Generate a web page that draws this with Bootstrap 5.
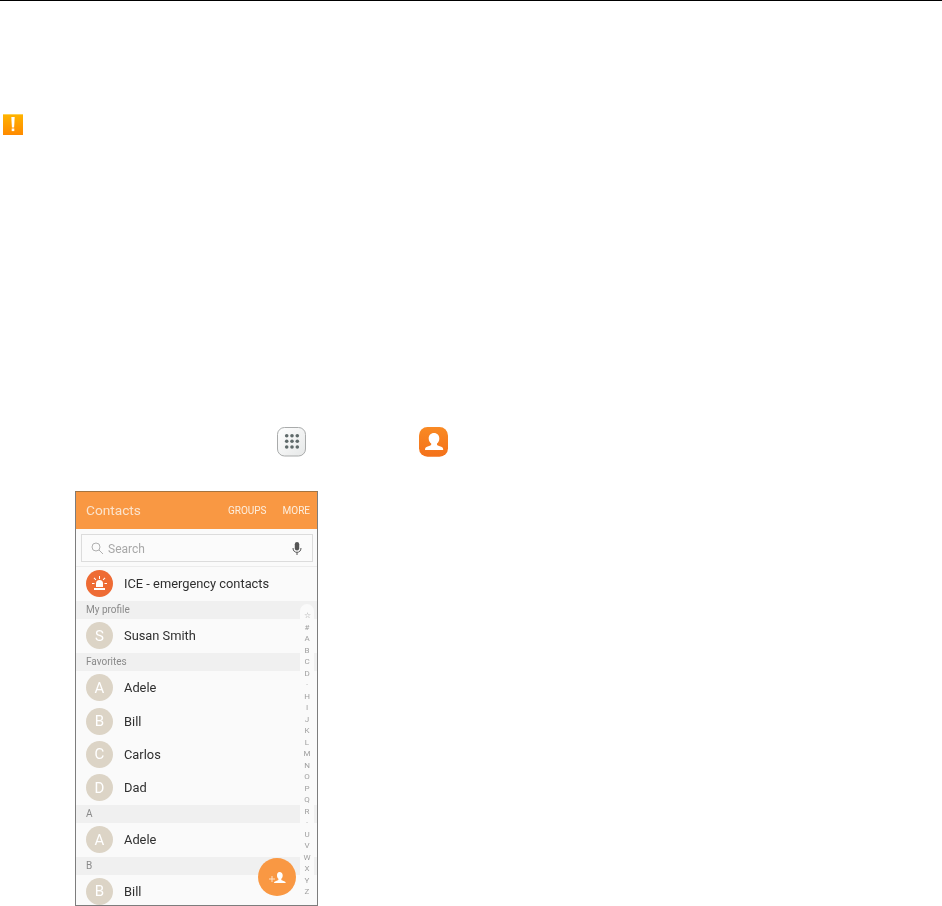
<!DOCTYPE html>
<html lang="en">
<head>
<meta charset="utf-8">
<title>Contacts</title>
<link href="https://cdn.jsdelivr.net/npm/bootstrap@5.3.0/dist/css/bootstrap.min.css" rel="stylesheet">
<style>
html,body{background:#fff;margin:0;height:906px;overflow:hidden}
body{font-family:Roboto,"Liberation Sans",sans-serif}
.rule-top{height:1px;background:#000}
.warn-icon{display:block;margin:113px 0 0 3px;width:20px;height:22px}
.launch-icons{margin:291px 0 0 277px;height:31px;gap:113px}
.launch-icons svg{display:block}
.phone{position:relative;margin:33px 0 0 75px;width:243px;height:415px;border:1px solid #7d7d7d;border-top-color:#a5743f;background:#fafafa;overflow:hidden;filter:blur(.4px)}
.ph-head{height:37px;background:#f99843;color:#fbe3cc;padding:0 7px 0 10px}
.ph-title{font-size:13.7px}
.ph-act{font-size:10px;color:#fdeede;margin-left:16px}
.ph-searchwrap{height:38px;padding:5px 4px 4px 5px;border-bottom:1px solid #ececec}
.ph-search{height:28px;border:1px solid #dcdcdc;background:#fbfbfb;padding:1px 10px 0 9px;color:#a8a8a8;font-size:12px;gap:4px}
.ph-row{height:33.4px;padding-left:10px;font-size:12.85px;color:#2f2f2f;gap:11px}
.ph-ice{height:33.7px}
.ph-sec{height:18.5px;background:#f0f0f0;color:#8a8a8a;font-size:10px;padding-left:10px}
.ph-av{width:27px;height:27px;border-radius:50%;background:#dcd4c6;color:#fff;font-size:15px;flex:none}
.ph-ice-av{background:#ee6b34}
.ph-index{position:absolute;left:224px;top:112px;width:14px;height:298px;background:#fafafa;border-radius:8px;color:#a0a0a0;font-size:8px;padding-top:6px;text-align:center}
.ph-index span{display:block;height:11.5px;line-height:11.5px}
.ph-fab{position:absolute;left:182px;top:366px;width:38px;height:38px;border-radius:50%;background:#f99843}
</style>
</head>
<body>
<div class="rule-top"></div>
<svg class="warn-icon" viewBox="0 0 20 22">
  <defs><linearGradient id="w" x1="0" y1="0" x2="0" y2="1"><stop offset="0" stop-color="#ffb400"/><stop offset="1" stop-color="#ff8a00"/></linearGradient></defs>
  <rect y="0" width="20" height="21" fill="url(#w)"/><rect y="0" width="20" height="1" fill="#ffd050"/>
  <path d="M8.300 3h3.400l-.6 10.500H8.900z" fill="#fff"/><rect x="8.700" y="14.500" width="2.600" height="2.600" fill="#fff"/>
</svg>
<div class="launch-icons d-flex">
  <svg width="29" height="31" viewBox="0 0 29 31">
    <defs><linearGradient id="g" x1="0" y1="0" x2="1" y2="1"><stop offset="0" stop-color="#fff"/><stop offset="1" stop-color="#e6e8e8"/></linearGradient></defs>
    <rect x=".5" y=".5" width="28" height="28.500" rx="7" fill="url(#g)" stroke="#a9abab"/>
    <g fill="#5f6a6a"><circle cx="9.700" cy="8.700" r="1.800"/><circle cx="15" cy="8.700" r="1.800"/><circle cx="20.300" cy="8.700" r="1.800"/><circle cx="9.700" cy="14.300" r="1.800"/><circle cx="15" cy="14.300" r="1.800"/><circle cx="20.300" cy="14.300" r="1.800"/><circle cx="9.700" cy="20" r="1.800"/><circle cx="15" cy="20" r="1.800"/><circle cx="20.300" cy="20" r="1.800"/></g>
  </svg>
  <svg width="29" height="31" viewBox="0 0 29 31">
    <defs><linearGradient id="o" x1="0" y1="0" x2="0" y2="1"><stop offset="0" stop-color="#f98a24"/><stop offset="1" stop-color="#f4711a"/></linearGradient></defs>
    <rect y="0" width="29" height="29.700" rx="8.500" fill="url(#o)"/>
    <path d="M15 6c3.200 0 5.300 2.300 5.300 5.400 0 2.300-1 4.100-2.300 5.100v1.200c0 .9 2.400 1.300 4.200 2 1.400.5 2 1.300 2 3.300H6c0-2 .6-2.800 2-3.300 1.800-.7 4.200-1.100 4.200-2v-1.200c-1.300-1-2.500-2.800-2.500-5.100C9.700 8.300 11.800 6 15 6z" fill="#fff"/>
  </svg>
</div>
<div class="phone">
  <div class="ph-head d-flex align-items-center">
    <span class="ph-title me-auto">Contacts</span><span class="ph-act">GROUPS</span><span class="ph-act">MORE</span>
  </div>
  <div class="ph-searchwrap">
    <div class="ph-search d-flex align-items-center">
      <svg width="13" height="13" viewBox="0 0 13 13" fill="none" stroke="#b0b0b0" stroke-width="1"><circle cx="5" cy="5" r="4"/><path d="M8 8l4 4"/></svg>
      <span class="me-auto">Search</span>
      <svg width="10" height="14" viewBox="0 0 10 14"><rect x="2.800" y="0" width="4.400" height="8.500" rx="2.200" fill="#555"/><path d="M1 6c0 3 1.800 4.300 4 4.300S9 9 9 6M5 10.300V13" fill="none" stroke="#555"/></svg>
    </div>
  </div>
  <div class="ph-row ph-ice d-flex align-items-center">
    <span class="ph-av ph-ice-av d-flex align-items-center justify-content-center">
      <svg width="17" height="17" viewBox="0 0 17 17" fill="#fff"><path d="M5 12V8.500a3.500 3.500 0 0 1 7 0V12z"/><rect x="3" y="13" width="11" height="2"/><path d="M8 1h1v3H8zM2.600 3.200l.7-.7 2 2-.7.7zM14.400 3.200l-.7-.7-2 2 .7.7zM1 8h2.500v1H1zM13.500 8H16v1h-2.500z"/></svg>
    </span>
    <span>ICE - emergency contacts</span>
  </div>
  <div class="ph-sec d-flex align-items-center">My profile</div>
  <div class="ph-row d-flex align-items-center"><span class="ph-av d-flex align-items-center justify-content-center">S</span><span>Susan Smith</span></div>
  <div class="ph-sec d-flex align-items-center">Favorites</div>
  <div class="ph-row d-flex align-items-center"><span class="ph-av d-flex align-items-center justify-content-center">A</span><span>Adele</span></div>
  <div class="ph-row d-flex align-items-center"><span class="ph-av d-flex align-items-center justify-content-center">B</span><span>Bill</span></div>
  <div class="ph-row d-flex align-items-center"><span class="ph-av d-flex align-items-center justify-content-center">C</span><span>Carlos</span></div>
  <div class="ph-row d-flex align-items-center"><span class="ph-av d-flex align-items-center justify-content-center">D</span><span>Dad</span></div>
  <div class="ph-sec d-flex align-items-center">A</div>
  <div class="ph-row d-flex align-items-center"><span class="ph-av d-flex align-items-center justify-content-center">A</span><span>Adele</span></div>
  <div class="ph-sec d-flex align-items-center">B</div>
  <div class="ph-row d-flex align-items-center"><span class="ph-av d-flex align-items-center justify-content-center">B</span><span>Bill</span></div>
  <div class="ph-index">
    <span>☆</span><span>#</span><span>A</span><span>B</span><span>C</span><span>D</span><span>·</span><span>H</span><span>I</span><span>J</span><span>K</span><span>L</span><span>M</span><span>N</span><span>O</span><span>P</span><span>Q</span><span>R</span><span>·</span><span>U</span><span>V</span><span>W</span><span>X</span><span>Y</span><span>Z</span>
  </div>
  <div class="ph-fab d-flex align-items-center justify-content-center">
    <svg width="20" height="14" viewBox="0 0 20 14"><path transform="translate(0 2)" d="M12.500 0c2 0 3.200 1.500 3.200 3.400 0 1.400-.6 2.600-1.400 3.400v1c0 .6 2 1 3.400 1.700.7.300 1 .8 1 1.500H7c0-.7.300-1.200 1-1.500 1.400-.7 3.400-1.100 3.400-1.700v-1C10.600 6 10 4.800 10 3.400 10 1.500 10.800 0 12.500 0z" fill="#fff"/><path d="M2 9h6M5 6v6" stroke="#fde2c8" stroke-width="1" fill="none"/></svg>
  </div>
</div>
<script src="https://cdn.jsdelivr.net/npm/bootstrap@5.3.0/dist/js/bootstrap.bundle.min.js"></script>
</body>
</html>
